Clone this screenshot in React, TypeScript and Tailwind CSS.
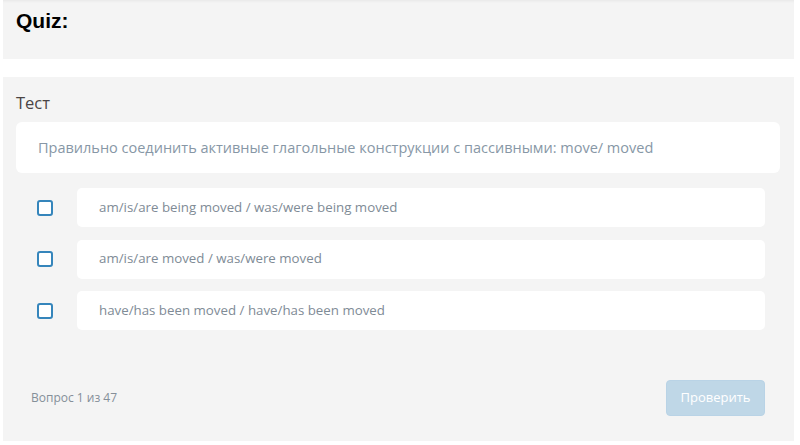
const answers = [
  "am/is/are being moved / was/were being moved",
  "am/is/are moved / was/were moved",
  "have/has been moved / have/has been moved",
]

export default function App() {
  return (
    <div className="min-h-[445px] bg-white pl-[3px] pr-[6px] font-['Open_Sans',sans-serif]">
      <div className="h-[59px] bg-[#f4f4f4] px-[13px] pt-[7px] shadow-[inset_0_3px_3px_-2px_rgba(0,0,0,0.06)]">
        <h1 className="font-['Liberation_Sans',Arial,sans-serif] text-[21px] font-bold leading-[28px] text-black">
          Quiz:
        </h1>
      </div>

      <div className="mt-[18px] h-[364px] bg-[#f4f4f4] pl-[13px] pr-[14px] pt-[14px]">
        <p className="text-[16.5px] leading-[24px] text-[#4b4444]">Тест</p>

        <div className="mt-[7px] flex h-[51px] items-center rounded-[6px] bg-white pl-[22px] text-[14.5px] text-[#8797a6]">
          Правильно соединить активные глагольные конструкции с пассивными: move/ moved
        </div>

        <div className="mt-[15px] flex flex-col gap-[12.5px] pr-[15px]">
          {answers.map((a) => (
            <div key={a} className="flex items-center">
              <div className="flex w-[61px] shrink-0 pl-[21px]">
                <span className="block h-[16px] w-[16px] rounded-[3px] border-2 border-[#3585bb] bg-white" />
              </div>
              <div className="flex h-[39px] flex-1 items-center rounded-[5px] bg-white pl-[22px] text-[13.3px] text-[#808b96]">
                {a}
              </div>
            </div>
          ))}
        </div>

        <div className="mt-[50px] flex items-center justify-between pl-[15px] pr-[15px]">
          <span className="text-[12px] text-[#858f99]">Вопрос 1 из 47</span>
          <button className="h-[36px] w-[99px] rounded-[4px] border border-[#b9d3e6] bg-[#bfd7e7] text-[13px] text-white">
            Проверить
          </button>
        </div>
      </div>
    </div>
  )
}
